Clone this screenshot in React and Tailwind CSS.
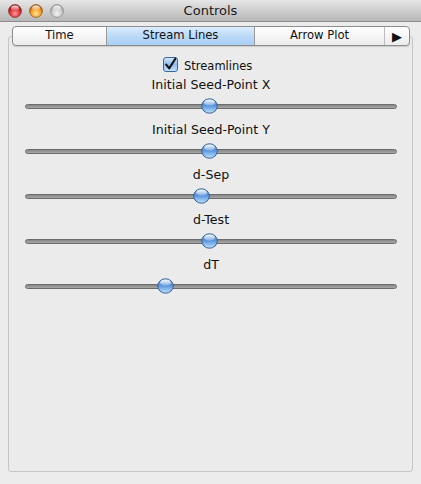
import React from "react";

function Light({ c1, c2, c3, rim }) {
  const id = c1.replace("#", "g");
  return (
    <svg width="14" height="14" viewBox="0 0 14 14">
      <defs>
        <radialGradient id={id} cx="50%" cy="70%" r="60%">
          <stop offset="0%" stopColor={c1} />
          <stop offset="60%" stopColor={c2} />
          <stop offset="100%" stopColor={c3} />
        </radialGradient>
        <linearGradient id={id + "h"} x1="0" y1="0" x2="0" y2="1">
          <stop offset="0%" stopColor="#ffffff" stopOpacity="0.9" />
          <stop offset="100%" stopColor="#ffffff" stopOpacity="0" />
        </linearGradient>
      </defs>
      <circle cx="7" cy="7" r="6.4" fill={`url(#${id})`} stroke={rim} strokeWidth="0.8" />
      <ellipse cx="7" cy="4.2" rx="4" ry="2.6" fill={`url(#${id}h)`} />
    </svg>
  );
}

function Thumb() {
  return (
    <svg width="17" height="16" viewBox="0 0 17 16">
      <defs>
        <linearGradient id="tb" x1="0" y1="0" x2="0" y2="1">
          <stop offset="0%" stopColor="#74a6e0" />
          <stop offset="45%" stopColor="#5591da" />
          <stop offset="100%" stopColor="#bfe4ff" />
        </linearGradient>
        <linearGradient id="th" x1="0" y1="0" x2="0" y2="1">
          <stop offset="0%" stopColor="#ffffff" stopOpacity="0.95" />
          <stop offset="100%" stopColor="#ffffff" stopOpacity="0.2" />
        </linearGradient>
      </defs>
      <ellipse cx="8.5" cy="8" rx="7.8" ry="7.2" fill="url(#tb)" stroke="#355f96" strokeWidth="1" />
      <ellipse cx="8.5" cy="4.6" rx="5.4" ry="3.2" fill="url(#th)" />
    </svg>
  );
}

function Checkbox() {
  return (
    <svg width="15" height="15" viewBox="0 0 15 15">
      <defs>
        <linearGradient id="cb" x1="0" y1="0" x2="0" y2="1">
          <stop offset="0%" stopColor="#d6e8fb" />
          <stop offset="50%" stopColor="#8fbdf0" />
          <stop offset="100%" stopColor="#c8e6ff" />
        </linearGradient>
      </defs>
      <rect x="0.5" y="0.5" width="14" height="14" rx="2.5" fill="url(#cb)" stroke="#3d66a0" />
      <path d="M3.2 7.6 L6.2 11.4 L12.4 1.6" fill="none" stroke="#111" strokeWidth="2" strokeLinecap="round" strokeLinejoin="round" />
    </svg>
  );
}

function Slider({ label, c }) {
  return (
    <div className="flex flex-col">
      <div className="h-[16px] leading-[16px] text-center text-[12.6px] text-[#111]">{label}</div>
      <div className="mt-[5px] h-[16px] relative flex items-center">
        <div className="w-full h-[5px] rounded-full border border-[#6c6c6c] bg-gradient-to-b from-[#868686] to-[#a9a9a9]" />
        <div className="absolute top-0" style={{ left: c - 8.5 - 25 }}>
          <Thumb />
        </div>
      </div>
    </div>
  );
}

export default function App() {
  const sliders = [
    { label: "Initial Seed-Point X", c: 209 },
    { label: "Initial Seed-Point Y", c: 209 },
    { label: "d-Sep", c: 201 },
    { label: "d-Test", c: 209 },
    { label: "dT", c: 165.5 },
  ];
  return (
    <div className="w-[421px] h-[484px] bg-[#ebeceb] flex flex-col font-['DejaVu_Sans',sans-serif] overflow-hidden">
      <div className="h-[22px] shrink-0 grid grid-cols-[1fr_auto_1fr] items-center bg-gradient-to-b from-[#e6e6e6] to-[#b7b7b7] border-b border-[#8e8e8e]">
        <div className="flex items-center gap-[7px] pl-[8px]">
          <Light c1="#ff9a9a" c2="#e0383a" c3="#a51417" rim="#8a2a2a" />
          <Light c1="#ffe59a" c2="#f3a32b" c3="#b8680b" rim="#8e5a1c" />
          <Light c1="#f2f2f2" c2="#cfcfcf" c3="#a8a8a8" rim="#8c8c8c" />
        </div>
        <div className="text-[13px] text-[#1a1a1a] leading-none">Controls</div>
        <div />
      </div>
      <div className="relative z-10 mt-[4px] ml-[12px] mr-[11px] h-[20px] flex rounded-[4px] border border-[#8d8d8d] bg-gradient-to-b from-white to-[#ececec] shadow-[0_1px_1px_rgba(0,0,0,0.15)] text-[11.6px] text-[#111] overflow-hidden">
        <div className="w-[93px] flex items-center justify-center">Time</div>
        <div className="w-[148px] flex items-center justify-center border-l border-[#9a9a9a] bg-gradient-to-b from-[#dcedfd] via-[#bcdaf8] to-[#a8cff5]">Stream Lines</div>
        <div className="w-[130px] flex items-center justify-center border-l border-[#9a9a9a]">Arrow Plot</div>
        <div className="flex-1 flex items-center justify-center border-l border-[#bdbdbd] text-[13px] leading-none">▶</div>
      </div>
      <div className="mx-[8px] -mt-[10px] mb-[12px] flex-1 border border-[#c6c6c6] rounded-[3px] bg-[#eaebea] pt-[21px] pr-[15px] pl-[16px]">
        <div className="h-[16px] flex items-center justify-start gap-[6px] text-[11.5px] text-[#111] pl-[138px]">
          <div className="-mt-[4px]"><Checkbox /></div>
          <span className="mt-[2px]">Streamlines</span>
        </div>
        <div className="mt-[3px] flex flex-col gap-[8px]">
          {sliders.map((s) => (
            <Slider key={s.label} label={s.label} c={s.c} />
          ))}
        </div>
      </div>
    </div>
  );
}
